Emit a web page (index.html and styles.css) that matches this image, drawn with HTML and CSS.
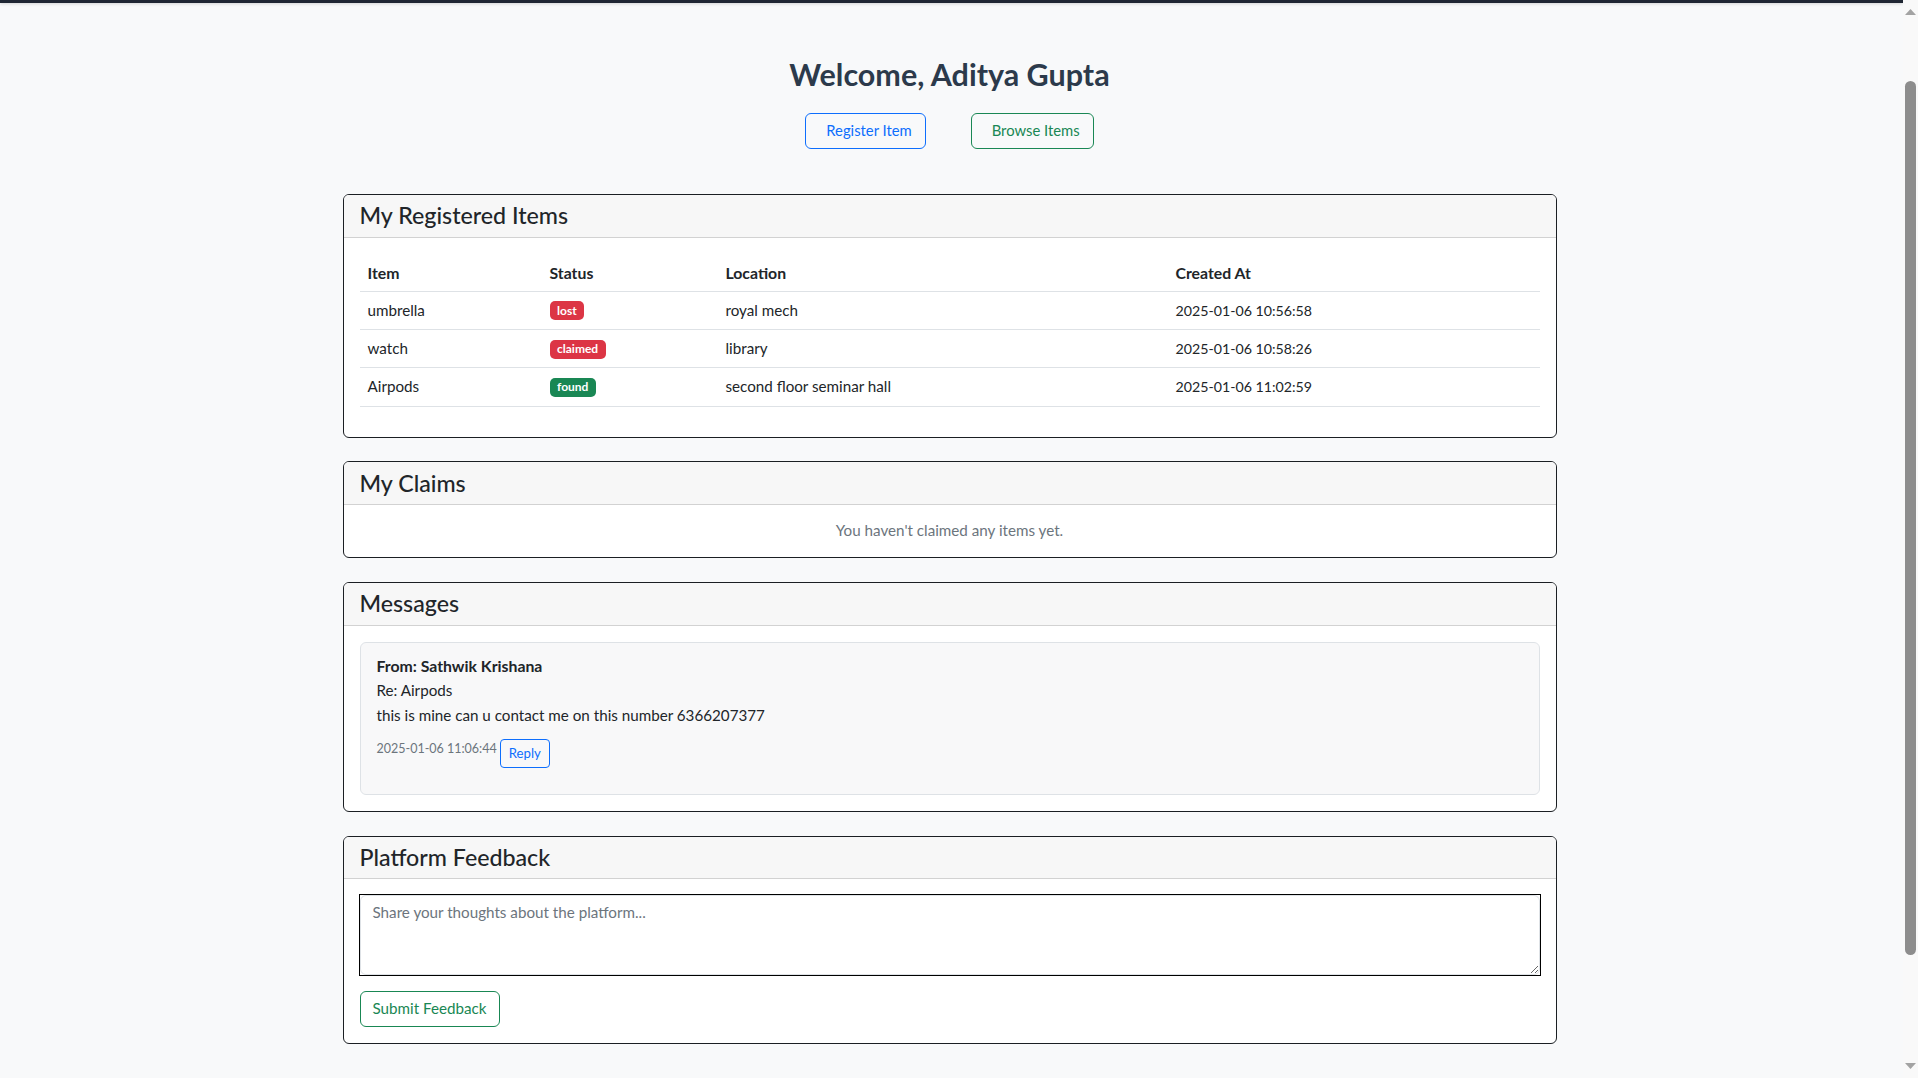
FILE: index.html
```html
<!DOCTYPE html>
<html lang="en">
<head>
<meta charset="utf-8">
<title>Dashboard</title>
<link rel="stylesheet" href="styles.css">
</head>
<body>
<nav class="topbar"></nav>
<main class="page">
  <h1 class="welcome">Welcome, Aditya Gupta</h1>
  <div class="actions">
    <a class="btn btn-blue btn-icon" href="#">Register Item</a>
    <a class="btn btn-green btn-icon" href="#">Browse Items</a>
  </div>

  <section class="card">
    <div class="card-header"><h4 class="card-title">My Registered Items</h4></div>
    <div class="card-body">
      <table class="items">
        <thead>
          <tr>
            <th class="col-item">Item</th>
            <th class="col-status">Status</th>
            <th class="col-location">Location</th>
            <th>Created At</th>
          </tr>
        </thead>
        <tbody>
          <tr>
            <td>umbrella</td>
            <td><span class="badge badge-red">lost</span></td>
            <td>royal mech</td>
            <td class="cell-date">2025-01-06 10:56:58</td>
          </tr>
          <tr>
            <td>watch</td>
            <td><span class="badge badge-red">claimed</span></td>
            <td>library</td>
            <td class="cell-date">2025-01-06 10:58:26</td>
          </tr>
          <tr>
            <td>Airpods</td>
            <td><span class="badge badge-green">found</span></td>
            <td>second floor seminar hall</td>
            <td class="cell-date">2025-01-06 11:02:59</td>
          </tr>
        </tbody>
      </table>
    </div>
  </section>

  <section class="card">
    <div class="card-header"><h4 class="card-title">My Claims</h4></div>
    <div class="card-body card-body-empty">
      <p class="muted-center">You haven't claimed any items yet.</p>
    </div>
  </section>

  <section class="card">
    <div class="card-header"><h4 class="card-title">Messages</h4></div>
    <div class="card-body">
      <div class="message">
        <p class="msg-from">From: Sathwik Krishana</p>
        <p class="msg-line">Re: Airpods</p>
        <p class="msg-text">this is mine can u contact me on this number 6366207377</p>
        <div class="msg-meta">
          <span class="msg-time">2025-01-06 11:06:44</span>
          <button class="btn-sm btn-blue" type="button">Reply</button>
        </div>
      </div>
    </div>
  </section>

  <section class="card">
    <div class="card-header"><h4 class="card-title">Platform Feedback</h4></div>
    <div class="card-body">
      <div class="feedback-frame">
        <textarea class="feedback-input" placeholder="Share your thoughts about the platform..."></textarea>
      </div>
      <button class="btn btn-green btn-submit" type="button">Submit Feedback</button>
    </div>
  </section>
</main>

<div class="scrollbar" aria-hidden="true">
  <svg class="scroll-arrow scroll-arrow-up" width="15" height="17" viewBox="0 0 15 17"><path d="M2 15 L7.5 9 L13 15 Z" fill="#a3a3a3"/></svg>
  <div class="scroll-thumb"></div>
  <svg class="scroll-arrow scroll-arrow-down" width="15" height="17" viewBox="0 0 15 17"><path d="M2 2 L7.5 8 L13 2 Z" fill="#a3a3a3"/></svg>
</div>
<script src="script.js"></script>
</body>
</html>
```

FILE: styles.css
```css
html, body {
  margin: 0;
  padding: 0;
}

body {
  background: #f8f9fa;
  color: #212529;
  font-family: "Segoe UI", Lato, "Open Sans", sans-serif;
  font-size: 15.2px;
  line-height: 21.3px;
  padding-right: 15px;
}

.topbar {
  height: 82px;
  background: #1f2633;
  box-shadow: 0 1px 3px rgba(0, 0, 0, 0.15);
}

.page {
  max-width: 1214px;
  margin: 0 auto;
  padding: 52px 4px 140px 0;
}

.welcome {
  margin: 0;
  text-align: center;
  font-size: 30.5px;
  line-height: 38.4px;
  font-weight: 700;
  color: #2c3a4b;
}

.actions {
  display: flex;
  justify-content: center;
  gap: 45px;
  margin-top: 20px;
  margin-bottom: 45px;
}

.btn {
  display: inline-block;
  box-sizing: border-box;
  padding: 6px 12px;
  border: 1px solid;
  border-radius: 6px;
  background: transparent;
  font-family: inherit;
  font-size: 15.2px;
  line-height: 21.3px;
  text-decoration: none;
  cursor: pointer;
}

.btn-icon {
  padding-left: 20px;
  padding-right: 13px;
  font-size: 14.8px;
}

.btn-blue {
  color: #0d6efd;
  border-color: #0d6efd;
}

.btn-green {
  color: #198754;
  border-color: #198754;
}

.card {
  background: #fff;
  border: 1px solid #1b1f23;
  border-radius: 6px;
  overflow: hidden;
  margin-bottom: 23.5px;
}

.card-header {
  background: #f7f7f7;
  border-bottom: 1px solid #d2d2d2;
  padding: 6.5px 16px;
}

.card-title {
  margin: 0;
  font-size: 23.2px;
  line-height: 28.8px;
  font-weight: 500;
  color: #212529;
}

.card-body {
  padding: 16px;
}

.card-body-empty {
  padding: 15.5px 16px;
}

.items {
  width: 100%;
  border-collapse: collapse;
  margin-bottom: 14px;
}

.items th,
.items td {
  text-align: left;
  padding: 8px;
  border-bottom: 1px solid #dee2e6;
  vertical-align: middle;
}

.items th {
  font-size: 15.8px;
  font-weight: 700;
}

.items .cell-date {
  font-size: 14.2px;
}

.col-item {
  width: 166px;
}

.col-status {
  width: 160px;
}

.col-location {
  width: 434px;
}

.badge {
  display: inline-block;
  padding: 3.5px 7.5px;
  border-radius: 5px;
  font-size: 12px;
  line-height: 12px;
  font-weight: 700;
  color: #fff;
  vertical-align: 1px;
}

.badge-red {
  background: #dc3545;
}

.badge-green {
  background: #198754;
}

.muted-center {
  margin: 0;
  text-align: center;
  color: #6c757d;
}

.message {
  background: #f8f8f9;
  border: 1px solid #dee2e6;
  border-radius: 6px;
  padding: 12px 16px 26px;
}

.message p {
  margin: 0;
}

.msg-from {
  font-size: 15.8px;
  font-weight: 700;
  margin-bottom: 4px !important;
}

.msg-line {
  margin-bottom: 4px !important;
}

.msg-meta {
  display: flex;
  align-items: flex-start;
  gap: 3px;
  margin-top: 13px;
}

.msg-time {
  font-size: 12.5px;
  line-height: 18.6px;
  color: #6c757d;
  margin-top: 1px;
}

.btn-sm {
  box-sizing: border-box;
  padding: 4px 8px;
  border: 1px solid;
  border-radius: 4px;
  background: transparent;
  font-family: inherit;
  font-size: 13.2px;
  line-height: 18.6px;
  cursor: pointer;
}

.feedback-frame {
  border: 1px solid #000;
  margin: -1px -1px 15px;
}

.feedback-input {
  display: block;
  box-sizing: border-box;
  width: 100%;
  height: 80px;
  margin: 0;
  padding: 6px 12px;
  border: 1px solid #dee2e6;
  border-radius: 6px;
  background: #fff;
  font-family: inherit;
  font-size: 15.2px;
  line-height: 21.3px;
  color: #212529;
  resize: vertical;
  outline: none;
}

.feedback-input::placeholder {
  color: #6c757d;
}

.scrollbar {
  position: fixed;
  top: 0;
  right: 0;
  width: 15px;
  height: 100%;
  background: #f9f9f9;
}

.scroll-arrow {
  position: absolute;
  left: 0;
  display: block;
}

.scroll-arrow-up {
  top: 0;
}

.scroll-arrow-down {
  bottom: 0;
}

.scroll-thumb {
  position: absolute;
  top: 81px;
  left: 2px;
  width: 11px;
  height: 874px;
  border-radius: 6px;
  background: #8d8d8d;
}
```

FILE: script.js
```js
function scrollToView() {
  window.scrollTo(0, 79);
}
scrollToView();
window.addEventListener('load', scrollToView);
```
